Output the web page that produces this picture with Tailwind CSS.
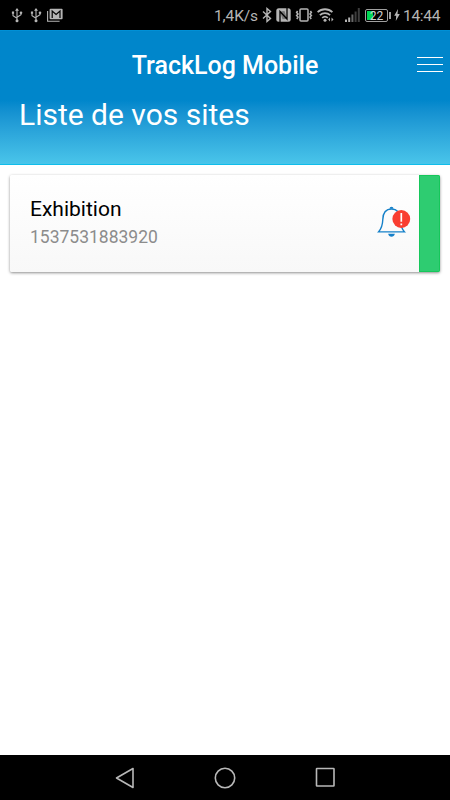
<!DOCTYPE html>
<html lang="fr">
<head>
    <meta charset="UTF-8">
    <meta name="viewport" content="width=device-width, initial-scale=1.0">
    <title>TrackLog Mobile</title>
    <script src="https://cdn.jsdelivr.net/npm/@tailwindcss/browser@4"></script>
</head>

<body class="h-screen overflow-hidden flex flex-col bg-white font-['Roboto',sans-serif]">

    <!-- Status bar -->
    <div class="h-[30px] shrink-0 bg-black text-[#b5b5b5] flex items-center pl-[11px] pr-[10px]">
        <svg class="w-3 h-4 shrink-0" viewBox="0 0 12 16" fill="none" stroke="currentColor" stroke-width="1.1">
            <path d="M6 2v12M2 5.5v3.2l4 2.5M10 5.5v2.3L6 10.2"/>
            <path d="M4 3.8 6 1l2 2.8zM.9 4.6h2.2v2.2H.9z" fill="currentColor" stroke="none"/>
            <circle cx="10" cy="5.7" r="1.3" fill="currentColor" stroke="none"/>
            <circle cx="6" cy="13.7" r="1.5" fill="currentColor" stroke="none"/>
        </svg>
        <svg class="w-3 h-4 shrink-0 ml-[7px]" viewBox="0 0 12 16" fill="none" stroke="currentColor" stroke-width="1.1">
            <path d="M6 2v12M2 5.5v3.2l4 2.5M10 5.5v2.3L6 10.2"/>
            <path d="M4 3.8 6 1l2 2.8zM.9 4.6h2.2v2.2H.9z" fill="currentColor" stroke="none"/>
            <circle cx="10" cy="5.7" r="1.3" fill="currentColor" stroke="none"/>
            <circle cx="6" cy="13.7" r="1.5" fill="currentColor" stroke="none"/>
        </svg>
        <svg class="w-4 h-[14px] shrink-0 ml-[5px]" viewBox="0 0 16 14">
            <path d="M.6 3v10.2h12" fill="none" stroke="currentColor" stroke-width="1.1"/>
            <rect x="2.6" y=".8" width="13" height="10.4" rx="1" fill="currentColor"/>
            <path d="M5.2 10V3l3.9 3.4L13 3v7" fill="none" stroke="#000" stroke-width="1.2"/>
        </svg>

        <span class="ml-auto pt-[3px] text-[15.5px] leading-none whitespace-nowrap w-[43px] tracking-[-0.1px]">1,4K/s</span>
        <svg class="w-[10px] h-4 shrink-0 ml-[5px]" viewBox="0 0 10 16" fill="none" stroke="currentColor" stroke-width="1.4">
            <path d="M1 4.5l7.5 7L5 14.4V1.6l3.5 2.9-7.5 7"/>
        </svg>
        <svg class="w-[15px] h-[14px] shrink-0 ml-[4px]" viewBox="0 0 15 14">
            <rect x=".3" y=".3" width="14.4" height="13.4" rx="2.5" fill="currentColor"/>
            <path d="M4 14V3.500l7 7.500V0" fill="none" stroke="#000" stroke-width="1.3"/>
            <path d="M4 3.500 8.500 3l2.500 8-4.500.200z" fill="#000" fill-opacity=".35"/>
        </svg>
        <svg class="w-[18px] h-[14px] shrink-0 ml-[4px]" viewBox="0 0 18 14" fill="none" stroke="currentColor" stroke-width="1.5">
            <rect x="5" y="1" width="8" height="12" rx="1"/>
            <path d="M2.6 3l-1 1.5L3 6 1.6 7.5 3 9l-1.2 2M15.4 3l1 1.5L15 6l1.4 1.5L15 9l1.2 2"/>
        </svg>
        <svg class="w-[17px] h-[14px] shrink-0 ml-[4px]" viewBox="0 0 17 14" fill="none" stroke="currentColor" stroke-width="1.8">
            <path d="M.6 4.2a10.8 10.8 0 0 1 14.8 0M2.9 7.2a7.4 7.4 0 0 1 10.2 0M5.2 9.9a4.2 4.2 0 0 1 5.6 0"/>
            <circle cx="8" cy="12.2" r="1.5" fill="currentColor" stroke="none"/>
            <path d="M13 9.5 11.2 11.5 13 13.5zM14.5 9.5l2 2-2 2z" fill="currentColor" stroke="none"/>
        </svg>
        <svg class="w-[15px] h-[14px] shrink-0 ml-[11px]" viewBox="0 0 15 14" fill="currentColor">
            <path d="M0 11.5h2V14H0zM3.2 9.5h2V14h-2z"/>
            <path d="M6.4 6.5h2V14h-2z" fill="#666"/>
            <path d="M9.6 3.5h2V14h-2zM12.8 0h2v14h-2z" fill="#3d3d3d"/>
        </svg>
        <div class="relative ml-[5px] w-[23px] h-[13px] shrink-0 border border-[#a0a0a0] rounded-[2px] p-px flex">
            <div class="w-[6px] bg-[#00d653]"></div>
            <span class="absolute inset-0 text-center text-[12px] leading-[12px] text-[#d0d0d0]">22</span>
        </div>
        <div class="ml-px w-[2px] h-[7px] shrink-0 bg-[#a0a0a0]"></div>
        <svg class="w-[6px] h-3 shrink-0 ml-[3px]" viewBox="0 0 6 12" fill="currentColor">
            <path d="M4 0 .2 6.7h2L1.8 12 5.8 5H3.5z"/>
        </svg>
        <span class="ml-[3px] pt-[3px] w-[37px] text-[15.5px] leading-none whitespace-nowrap tracking-[-0.3px]">14:44</span>
    </div>

    <!-- Header -->
    <header class="h-[135px] shrink-0 border-t border-t-[#0090d6] border-b border-b-[#10bdea] bg-linear-to-b from-[#0086cb] from-52% to-[#49c5ea] text-white">
        <div class="relative h-[70px] flex items-center justify-center">
            <h1 class="text-[25px] leading-7 font-medium whitespace-nowrap">TrackLog Mobile</h1>
            <button class="absolute right-[7px] top-[26px] w-[26px] h-[15px] flex flex-col justify-between" aria-label="Menu">
                <span class="h-px w-full bg-white"></span>
                <span class="h-px w-full bg-white"></span>
                <span class="h-px w-full bg-white"></span>
            </button>
        </div>
        <h2 class="pl-[19px] -mt-[4px] text-[30px] leading-9 font-normal">Liste de vos sites</h2>
    </header>

    <!-- Site list -->
    <main class="flex-1 px-[10px] pt-[10px]">
        <div class="h-[97px] flex items-center rounded-[2px] overflow-hidden bg-linear-to-b from-white to-[#f8f8f8] shadow-[0_1px_3px_rgba(0,0,0,0.45)]">
            <div class="pl-5 flex-1">
                <div class="text-[21px] leading-[27px] text-black">Exhibition</div>
                <div class="text-[17.5px] leading-[29px] text-[#8c8c8c]">1537531883920</div>
            </div>
            <svg class="w-[34px] h-[34px] mr-[8px] -mt-[5px]" viewBox="0 0 34 34">
                <path d="M1.5 27.9C4.6 24.500 5.6 21.500 5.800 15.500 6 8.500 9 5 14.5 5S23 8.500 23.200 15.500c.2 6 1.200 9 4.300 12.400z" fill="none" stroke="#1681c9" stroke-width="1.4"/>
                <path d="M12.5 4.800a2 2 0 0 1 4 0z" fill="#1681c9"/>
                <path d="M11.2 29.7h6.600c-.4 4-6.200 4-6.600 0z" fill="#1681c9"/>
                <circle cx="24.3" cy="15" r="8.9" fill="#f93e31"/>
                <path d="M24.3 9v8.700M24.3 19.5v1.8" fill="none" stroke="#fff" stroke-width="1.7"/>
            </svg>
            <div class="w-[21px] self-stretch bg-[#2ecc71] border border-[#16c75b]"></div>
        </div>
    </main>

    <!-- Android navigation bar -->
    <nav class="h-[45px] shrink-0 bg-black text-[#b8b8b8] flex items-center justify-between pl-[115px] pr-[114px]">
        <svg class="w-5 h-[22px]" viewBox="0 0 20 22" fill="none" stroke="currentColor" stroke-width="1.6" stroke-linejoin="round">
            <path d="M18 1.5v19L1.5 11z"/>
        </svg>
        <svg class="w-[22px] h-[22px]" viewBox="0 0 22 22" fill="none" stroke="currentColor" stroke-width="1.6">
            <circle cx="11" cy="11" r="9.7"/>
        </svg>
        <svg class="w-[21px] h-[21px]" viewBox="0 0 21 21" fill="none" stroke="currentColor" stroke-width="1.6">
            <rect x="1.5" y="1.5" width="17.5" height="17.5" rx=".5"/>
        </svg>
    </nav>
</body>
</html>
